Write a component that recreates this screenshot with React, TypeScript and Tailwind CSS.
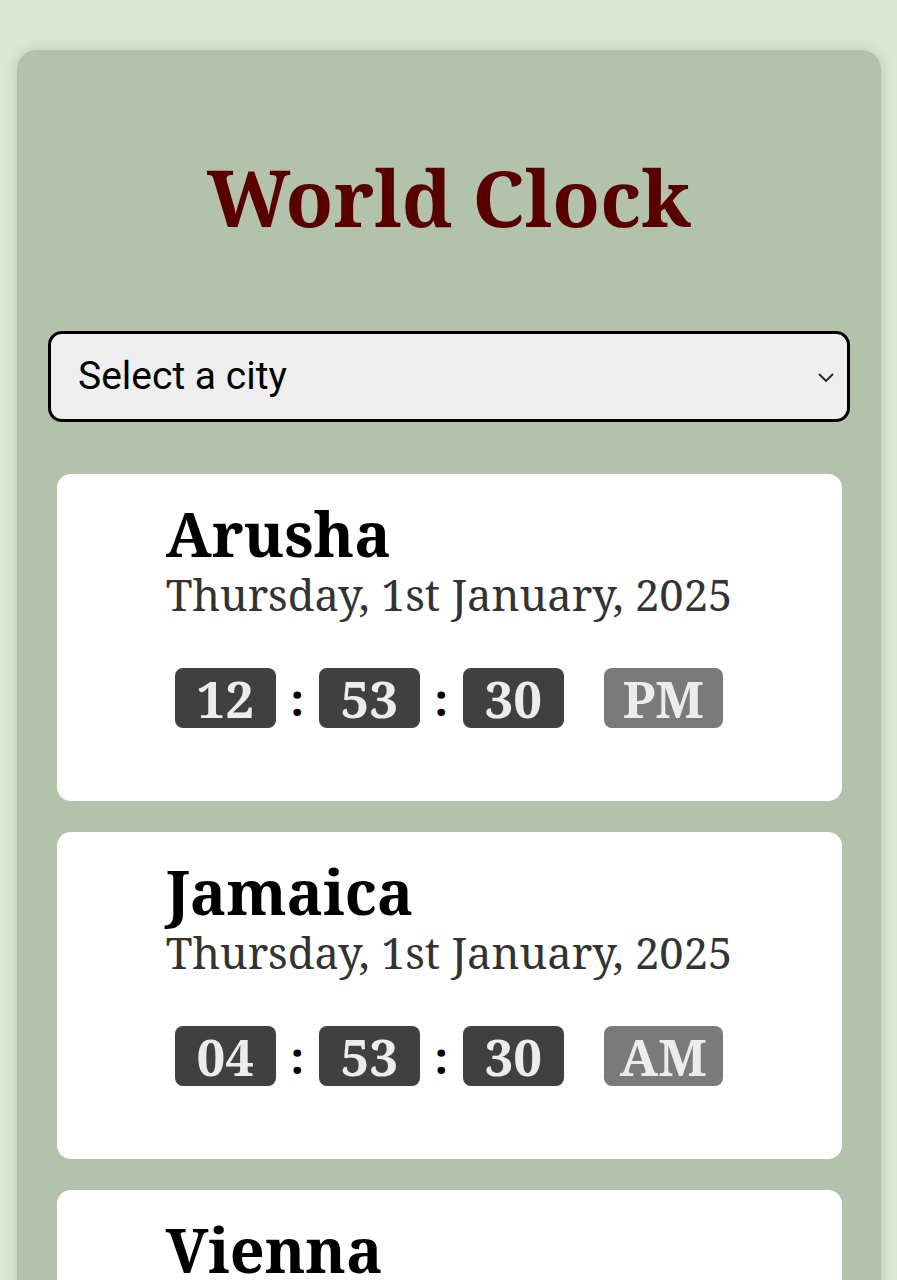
import React from "react";

const serif = { fontFamily: '"Noto Serif", "DejaVu Serif", serif' };

function Box({ children, light }: { children: React.ReactNode; light?: boolean }) {
  return (
    <div
      className={`flex h-[60px] shrink-0 items-center justify-center rounded-[8px] text-[51px] font-bold leading-none text-[#ececec] ${light ? "w-[119px] bg-[#7a7a7a]" : "w-[101px] bg-[#404040]"}`}
    >
      {children}
    </div>
  );
}

function Colon() {
  return <div className="w-[43px] shrink-0 text-center text-[46px] font-bold leading-none text-black">:</div>;
}

function Card({ city, date, h, m, s, ap }: { city: string; date: string; h: string; m: string; s: string; ap: string }) {
  return (
    <div className="flex h-[327px] w-full shrink-0 justify-center rounded-[14px] bg-white pt-[26px]">
      <div className="flex flex-col" style={serif}>
        <div className="text-[61px] font-bold leading-[68px] text-black">{city}</div>
        <div className="text-[43.5px] leading-[52px] text-[#333]">{date}</div>
        <div className="mt-[48px] flex items-center pl-[9px]">
          <Box>{h}</Box>
          <Colon />
          <Box>{m}</Box>
          <Colon />
          <Box>{s}</Box>
          <div className="w-[40px] shrink-0" />
          <Box light>{ap}</Box>
        </div>
      </div>
    </div>
  );
}

export default function App() {
  return (
    <div className="h-[1280px] w-[897px] overflow-hidden bg-[#d9e8d0] pt-[50px] pl-[17px]">
      <div className="flex w-[864px] flex-col items-center rounded-[20px] bg-[#b3c2ab] px-[31px] pb-[40px] shadow-[0_0_12px_rgba(120,150,110,0.35)]">
        <h1 className="mt-[97px] shrink-0 text-[78px] font-bold leading-[100px] text-[#580000]" style={serif}>
          World Clock
        </h1>
        <div className="mt-[84px] flex h-[91px] w-[802px] shrink-0 items-center justify-between rounded-[14px] border-[3px] border-black bg-[#efefef] pl-[27px] pr-[12px]" style={{ fontFamily: 'Roboto, sans-serif' }}>
          <span className="text-[39px] text-black">Select a city</span>
          <svg width="18" height="12" viewBox="0 0 18 12" fill="none" stroke="#222" strokeWidth="1.8">
            <path d="M2 3l7 7 7-7" />
          </svg>
        </div>
        <div className="mt-[52px] flex w-[785px] shrink-0 flex-col gap-[31px]">
          <Card city="Arusha" date="Thursday, 1st January, 2025" h="12" m="53" s="30" ap="PM" />
          <Card city="Jamaica" date="Thursday, 1st January, 2025" h="04" m="53" s="30" ap="AM" />
          <Card city="Vienna" date="Thursday, 1st January, 2025" h="02" m="53" s="30" ap="PM" />
        </div>
      </div>
    </div>
  );
}
